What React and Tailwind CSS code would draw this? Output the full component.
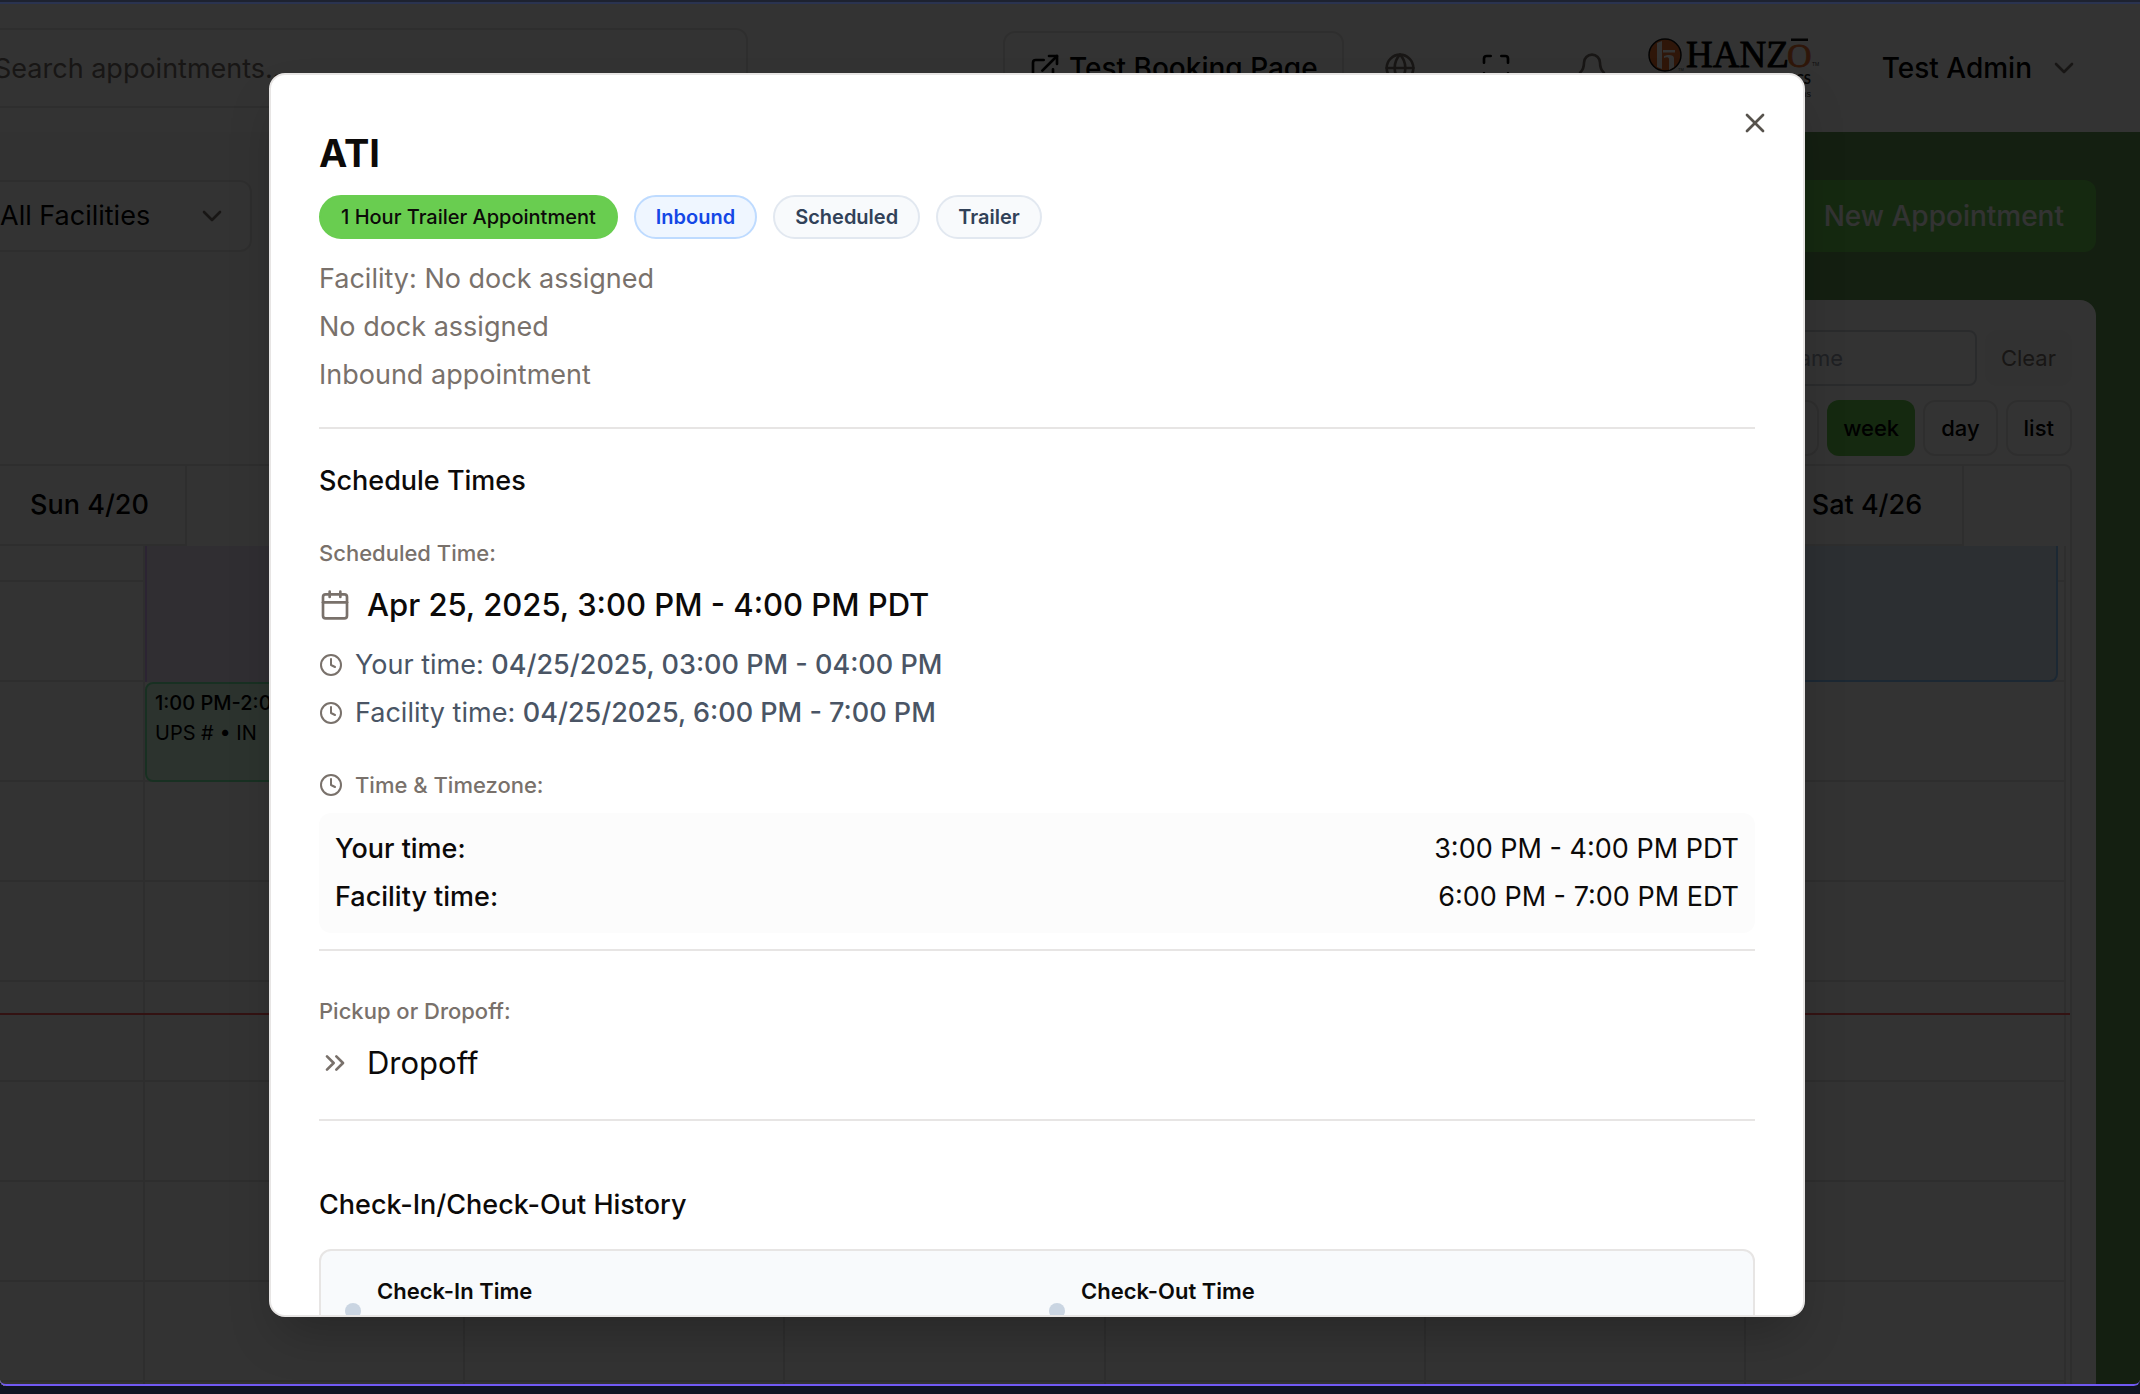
import React from "react";
import {
  Bell,
  Calendar,
  ChevronDown,
  ChevronsRight,
  Clock,
  ExternalLink,
  Globe,
  Maximize,
  X,
} from "lucide-react";

const DAYS = ["Mon 4/21", "Tue 4/22", "Wed 4/23", "Thu 4/24", "Fri 4/25"];
const HOURS = [0, 1, 2, 3, 4, 5, 6, 7, 8];
const COLUMNS = [0, 1, 2, 3, 4, 5];

function Logo() {
  return (
    <svg className="h-[72px] w-[174px]" viewBox="0 0 174 72" role="img" aria-label="Hanzo Logistics">
      <circle cx="17" cy="23" r="16" fill="#e8702e" stroke="#111" strokeWidth="1.5" />
      <path d="M9 11 L14 9 V37 L9 35 Z" fill="#fff" />
      <path d="M15 18 H27 V20.5 H15 Z" fill="#fff" />
      <path d="M16 24 C19 22.5 26 22 26 26 V35 L21 38 V27 C21 25 18 25 16 26 Z" fill="#fff" />
      <text x="30" y="39" fontFamily="Liberation Sans, sans-serif" fontSize="4" fill="#444">TM</text>
      <text x="38" y="35" fontFamily="Liberation Serif, serif" fontSize="37" fill="#000" stroke="#000" strokeWidth="0.8">HANZ</text>
      <text x="139" y="35" fontFamily="Liberation Serif, serif" fontSize="34" fill="#e8702e" stroke="#e8702e" strokeWidth="0.8">O</text>
      <path d="M143 6.5 H160 V9 H143 Z" fill="#111" />
      <text x="164" y="34" fontFamily="Liberation Sans, sans-serif" fontSize="5" fill="#444">TM</text>
      <text x="163" y="52" textAnchor="end" fontFamily="Lato, sans-serif" fontSize="13" fontWeight="700" fill="#222">LOGISTICS</text>
      <text x="163" y="65" textAnchor="end" fontFamily="Liberation Sans, sans-serif" fontSize="9" fill="#333">Logistics Solutions</text>
    </svg>
  );
}

function Header() {
  return (
    <header className="flex h-32 shrink-0 items-center bg-white pr-15">
      <input
        aria-label="Search appointments"
        placeholder="Search appointments..."
        className="-ml-10 h-20 w-[788px] rounded-xl border-2 border-stone-200 pl-8 placeholder:text-stone-500"
      />
      <div className="ml-auto flex items-center">
        <button className="flex h-[74px] items-center gap-2 rounded-xl border-2 border-stone-200 px-6 text-[28px] font-medium">
          <ExternalLink className="size-8" />
          Test Booking Page
        </button>
        <button aria-label="Language" className="ml-10 text-stone-500"><Globe className="size-8" /></button>
        <button aria-label="Full screen" className="ml-16"><Maximize className="size-8" /></button>
        <button aria-label="Notifications" className="ml-16 text-stone-500"><Bell className="size-8" /></button>
        <div className="ml-10"><Logo /></div>
        <button className="ml-15 flex items-center gap-4 text-[28px] font-medium">
          Test Admin
          <ChevronDown className="size-8 text-stone-500" />
        </button>
      </div>
    </header>
  );
}

function Toolbar() {
  return (
    <div className="flex h-[168px] shrink-0 items-center pr-11">
      <button className="-ml-6 flex h-[72px] w-[276px] items-center justify-between rounded-xl border-2 border-stone-200 bg-white px-[22px]">
        All Facilities
        <ChevronDown className="size-8 text-stone-500" />
      </button>
      <button className="ml-auto h-[72px] w-[400px] rounded-xl bg-[#69cd50] pr-8 text-right text-[28px] font-medium text-white">
        New Appointment
      </button>
    </div>
  );
}

function CalendarCard() {
  const view = "h-14 rounded-xl border-2 border-stone-200 px-4 text-[22px] font-medium";
  return (
    <section className="-ml-8 mr-11 flex min-h-0 flex-1 flex-col rounded-t-2xl bg-white pr-6">
      <div className="flex justify-end gap-2 pt-[30px]">
        <input
          aria-label="Filter by name"
          placeholder="Search by name"
          className="h-14 w-[336px] rounded-lg border-2 border-gray-300 px-8 text-[22px] placeholder:text-gray-400"
        />
        <button className="h-14 rounded-xl bg-stone-50 px-4 text-[22px] text-stone-500">Clear</button>
      </div>
      <div className="flex justify-end gap-2 pt-[14px] pb-2">
        <button className={view}>month</button>
        <button className="h-14 rounded-xl bg-[#69cd50] px-4 text-[22px] font-medium">week</button>
        <button className={view}>day</button>
        <button className={view}>list</button>
      </div>
      <div className="flex min-h-0 flex-1 flex-col rounded-t-lg border-x-2 border-t-2 border-stone-200">
        <div className="flex h-20 shrink-0 font-medium">
          <div className="flex w-[217px] items-center justify-center border-r-2 border-b-2 border-stone-200 pl-6">Sun 4/20</div>
          {DAYS.map((day) => (
            <div key={day} className="flex flex-1 items-center justify-center">{day}</div>
          ))}
          <div className="flex w-[192px] items-center justify-center border-r-2 border-b-2 border-stone-200">Sat 4/26</div>
          <div className="w-[106px]" />
        </div>
        <div className="relative flex min-h-0 flex-1 overflow-hidden pr-1">
          <div className="w-[175px] shrink-0 border-r-2 border-stone-200">
            <HourLines />
          </div>
          {COLUMNS.map((column) => (
            <div key={column} className="relative flex-1 border-r-2 border-stone-200">
              <HourLines />
              {column === 0 && (
                <>
                  <div className="absolute inset-x-0 top-0 h-[136px] border-l-2 border-purple-300 bg-[#f0e6fa]" />
                  <div className="absolute inset-x-0 top-[136px] h-[100px] rounded-lg border-2 border-green-300 bg-green-100 px-2 pt-1 text-xl">
                    <div className="leading-[30px] font-medium">1:00 PM-2:00 PM</div>
                    <div className="leading-[30px]">UPS # • IN</div>
                  </div>
                </>
              )}
              {column === 5 && (
                <div className="absolute top-0 right-1.5 left-0 h-[136px] rounded-b-lg border-x-2 border-b-2 border-blue-300 bg-[#d9ebf8]" />
              )}
            </div>
          ))}
          <div className="absolute inset-x-0 top-[467px] h-0.5 bg-[#ff5a5a]" />
        </div>
      </div>
    </section>
  );
}

function HourLines() {
  return (
    <div>
      <div className="h-9 border-b-2 border-stone-200" />
      {HOURS.map((hour) => (
        <div key={hour} className="h-[100px] border-b-2 border-stone-200" />
      ))}
    </div>
  );
}

function Pill({ className, children }) {
  return (
    <span className={`flex h-11 items-center rounded-full border-2 px-5 ${className}`}>{children}</span>
  );
}

function TimeLine({ label, value }) {
  return (
    <div className="flex items-center gap-3 text-gray-600">
      <Clock className="size-6 text-stone-500" />
      <p>{label} <span className="font-medium">{value}</span></p>
    </div>
  );
}

function CheckEntry({ title }) {
  return (
    <div className="flex min-h-20 flex-1 items-stretch gap-4">
      <span className="size-4 self-center rounded-full bg-slate-300" />
      <h3 className="text-[22px] font-semibold">{title}</h3>
    </div>
  );
}

function AppointmentDialog() {
  const label = "text-[22px] leading-8 font-medium text-stone-500";
  return (
    <div role="dialog" aria-modal="true" aria-labelledby="title" className="relative max-h-[90%] w-full max-w-[1536px] overflow-hidden rounded-2xl border-2 border-stone-200 bg-white px-12 pt-12 text-stone-950 shadow-2xl">
      <button aria-label="Close" className="absolute top-8 right-8 text-stone-600"><X className="size-8" /></button>
      <h1 id="title" className="pt-2 text-[38px] leading-[44px] font-bold">ATI</h1>
      <div className="mt-5 flex gap-4 text-xl">
        <Pill className="border-[#69cd50] bg-[#69cd50] font-medium">1 Hour Trailer Appointment</Pill>
        <Pill className="border-blue-200 bg-blue-50 font-semibold text-blue-700">Inbound</Pill>
        <Pill className="border-slate-200 bg-slate-50 font-semibold text-slate-700">Scheduled</Pill>
        <Pill className="border-slate-200 bg-slate-50 font-semibold text-slate-700">Trailer</Pill>
      </div>
      <div className="mt-5 flex flex-col gap-2 text-stone-500">
        <p>Facility: No dock assigned</p>
        <p>No dock assigned</p>
        <p>Inbound appointment</p>
      </div>
      <hr className="mt-8 border-t-2 border-stone-200" />
      <h2 className="mt-8 font-medium">Schedule Times</h2>
      <h3 className={`mt-9 ${label}`}>Scheduled Time:</h3>
      <div className="mt-4 flex items-center gap-4 text-[31px] font-medium">
        <Calendar className="size-8 text-stone-500" />
        Apr 25, 2025, 3:00 PM - 4:00 PM PDT
      </div>
      <div className="mt-5 flex flex-col gap-2">
        <TimeLine label="Your time:" value="04/25/2025, 03:00 PM - 04:00 PM" />
        <TimeLine label="Facility time:" value="04/25/2025, 6:00 PM - 7:00 PM" />
      </div>
      <h3 className={`mt-9 flex items-center gap-3 ${label}`}>
        <Clock className="size-6" />
        Time &amp; Timezone:
      </h3>
      <dl className="mt-3 flex flex-col gap-2 rounded-xl bg-[#fcfcfc] p-4">
        <div className="flex justify-between"><dt className="font-medium">Your time:</dt><dd>3:00 PM - 4:00 PM PDT</dd></div>
        <div className="flex justify-between"><dt className="font-medium">Facility time:</dt><dd>6:00 PM - 7:00 PM EDT</dd></div>
      </dl>
      <hr className="mt-4 border-t-2 border-stone-200" />
      <h3 className={`mt-11 ${label}`}>Pickup or Dropoff:</h3>
      <div className="mt-4 flex items-center gap-4 text-[31px]">
        <ChevronsRight className="size-8 text-stone-500" />
        Dropoff
      </div>
      <hr className="mt-9 border-t-2 border-stone-200" />
      <h2 className="mt-16 font-medium">Check-In/Check-Out History</h2>
      <div className="mt-6 flex gap-6 rounded-xl border-2 border-stone-200 bg-slate-50 px-6 py-5">
        <CheckEntry title="Check-In Time" />
        <CheckEntry title="Check-Out Time" />
      </div>
    </div>
  );
}

export default function App() {
  return (
    <div className="flex h-screen flex-col bg-[#0f1423] pb-2 font-['Inter',sans-serif] text-[27px] leading-10">
      <div className="h-0.5 shrink-0 bg-[#1d2230]" />
      <div className="h-0.5 shrink-0 bg-[#2a3350]" />
      <div className="relative flex min-h-0 flex-1 flex-col overflow-hidden rounded-b-md bg-linear-to-r from-stone-50 from-50% to-[#649b55] to-80%">
        <Header />
        <Toolbar />
        <CalendarCard />
        <div className="absolute inset-0 flex items-center justify-center bg-black/80 pr-[66px]">
          <AppointmentDialog />
        </div>
        <div className="absolute inset-x-0 bottom-0 h-2 rounded-b-md border-b-2 border-[#7159f3]" />
      </div>
    </div>
  );
}
